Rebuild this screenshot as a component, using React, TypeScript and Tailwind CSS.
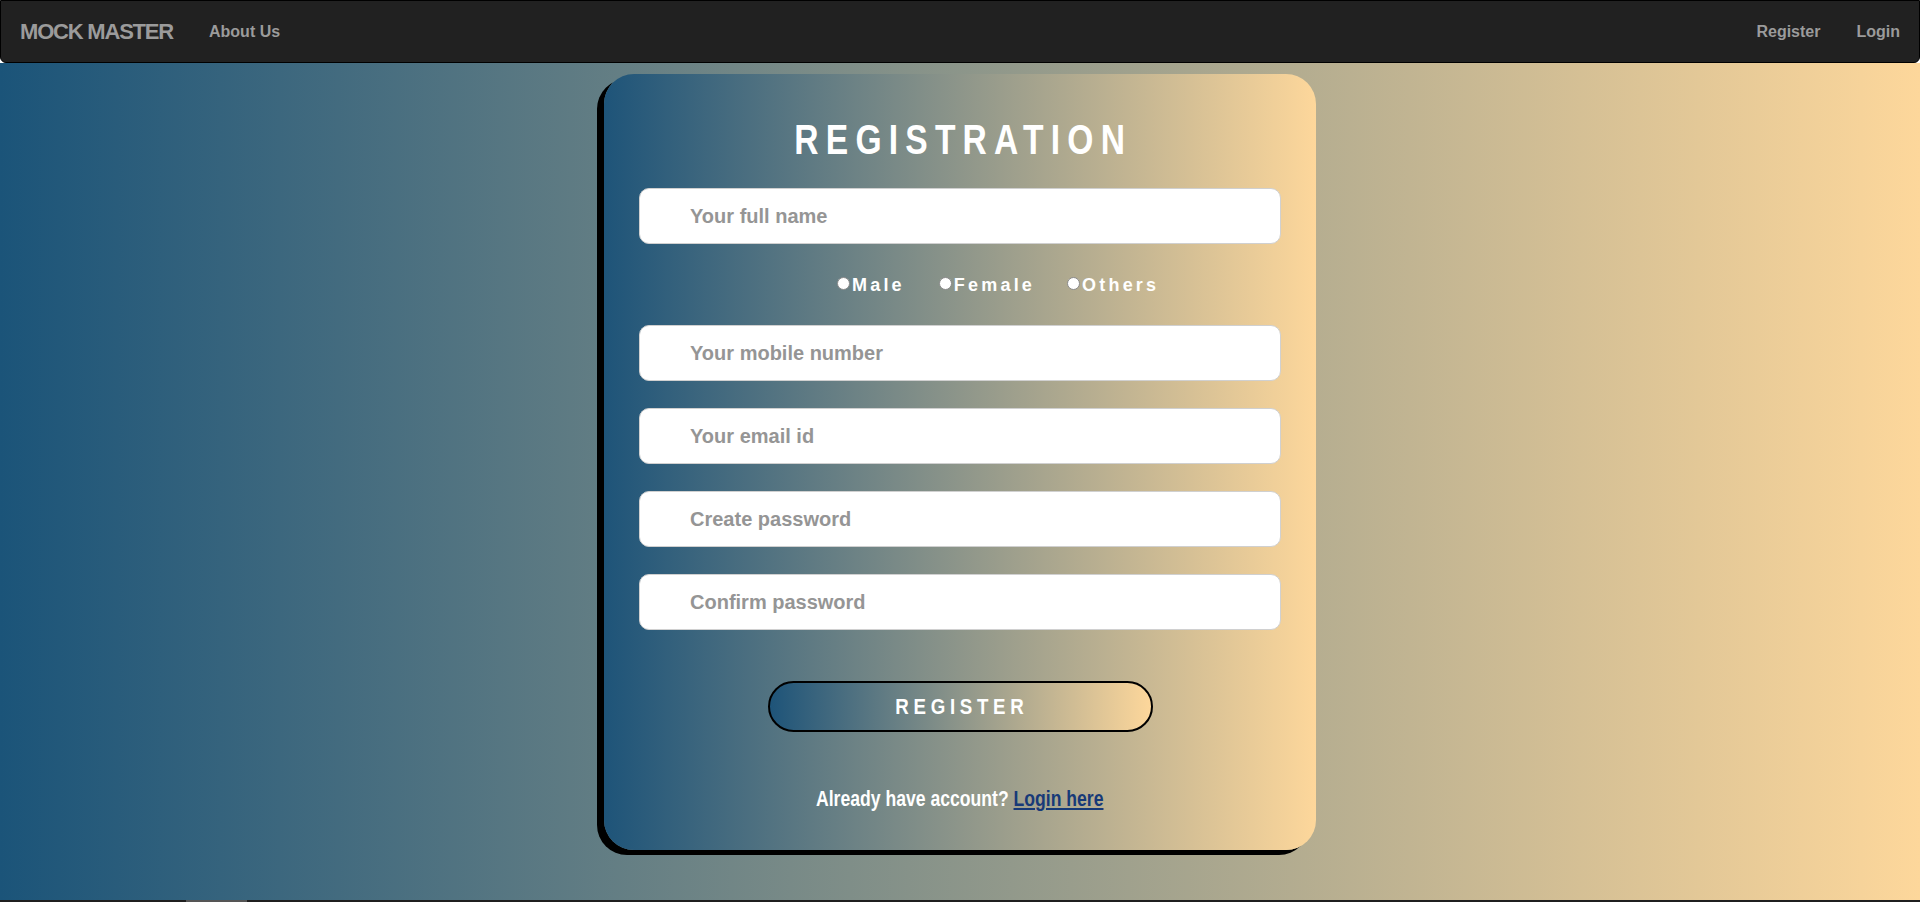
import React from "react";

const sans = "font-['Liberation_Sans',Arial,sans-serif]";

function Field({ placeholder, type = "text" }: { placeholder: string; type?: string }) {
  return (
    <input
      type={type}
      placeholder={placeholder}
      className={`${sans} block w-[642px] h-[56px] rounded-[10px] border border-[#d0d0d0] bg-white pl-[50px] text-[20px] font-bold text-[#333] placeholder:text-[#959595] outline-none`}
    />
  );
}

function Radio({ label, className = "" }: { label: string; className?: string }) {
  return (
    <label className={`flex items-start ${className}`}>
      <span className="mt-[2px] block w-[13px] h-[13px] rounded-full bg-white border border-[#8a8a8a]" />
      <span className="ml-[2px] text-white text-[18px] font-bold tracking-[3.2px] leading-[20px]">{label}</span>
    </label>
  );
}

export default function App() {
  return (
    <div className={`${sans} w-full h-[902px] flex flex-col overflow-hidden`}>
      <nav className="h-[63px] shrink-0 bg-[#212121] border border-black rounded-b-[6px] flex items-center px-[19px]">
        <span className="text-[#9b9b9b] text-[22px] font-bold tracking-[-1.2px]">MOCK MASTER</span>
        <span className="ml-[36px] text-[#9b9b9b] text-[16px] font-bold">About Us</span>
        <div className="ml-auto flex items-center gap-[36px]">
          <span className="text-[#9b9b9b] text-[16px] font-bold">Register</span>
          <span className="text-[#9b9b9b] text-[16px] font-bold">Login</span>
        </div>
      </nav>
      <main className="flex-1 bg-[linear-gradient(to_right,#1b5479,#fdd79b)] flex justify-center pt-[11px]">
        <div className="w-[712px] h-[776px] rounded-[30px] shadow-[-7px_5px_0_#000] bg-[linear-gradient(to_right,#1e5479,#fdd79b)] flex flex-col items-center">
          <h1 className="mt-[44px] text-white text-[42px] leading-[44px] font-bold tracking-[9px] pl-[9px] scale-x-[0.8]">REGISTRATION</h1>
          <div className="mt-[26px]">
            <Field placeholder="Your full name" />
          </div>
          <div className="mt-[31px] self-stretch flex items-start pl-[233px] h-[22px]">
            <Radio label="Male" />
            <Radio label="Female" className="ml-[34px]" />
            <Radio label="Others" className="ml-[32px]" />
          </div>
          <div className="mt-[28px] flex flex-col gap-[27px]">
            <Field placeholder="Your mobile number" />
            <Field placeholder="Your email id" type="email" />
            <Field placeholder="Create password" type="password" />
            <Field placeholder="Confirm password" type="password" />
          </div>
          <button className="mt-[51px] w-[385px] h-[51px] rounded-full border-2 border-black bg-[linear-gradient(to_right,#1e5479,#fdd79b)] text-white">
            <span className="inline-block text-[22px] font-bold tracking-[5.5px] pl-[5px] scale-x-[0.85]">REGISTER</span>
          </button>
          <p className="mt-[50px] text-white text-[22px] font-bold scale-x-[0.8] whitespace-nowrap">
            Already have account? <a href="#" className="text-[#173a78] underline">Login here</a>
          </p>
        </div>
      </main>
      <div className="h-[2px] shrink-0 bg-[#1f1f1f] flex">
        <div className="ml-[186px] w-[61px] bg-[#555]" />
      </div>
    </div>
  );
}
